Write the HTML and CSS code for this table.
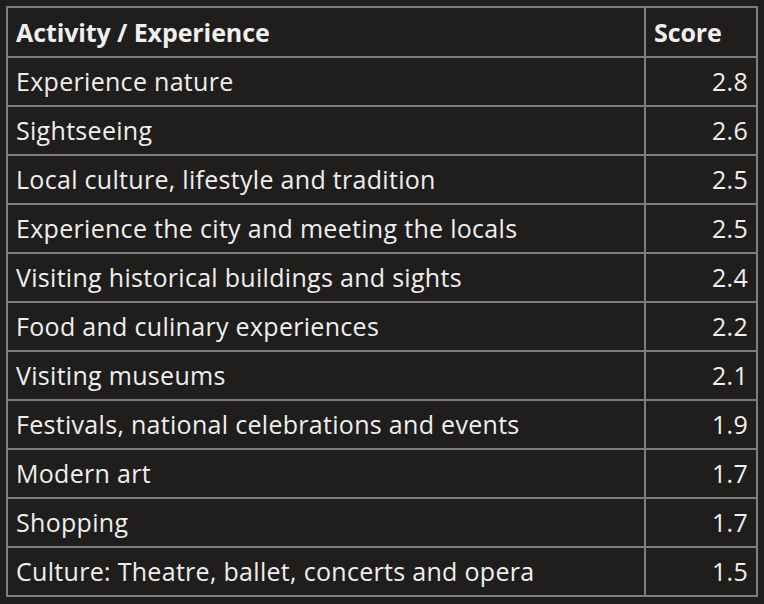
FILE: index.html
```html
<!DOCTYPE html>
<html>
<head>
<meta charset="utf-8">
<link rel="stylesheet" href="styles.css">
</head>
<body>
<table class="scores">
  <thead>
    <tr><th class="act">Activity / Experience</th><th class="score">Score</th></tr>
  </thead>
  <tbody>
    <tr><td>Experience nature</td><td class="num">2.8</td></tr>
    <tr><td>Sightseeing</td><td class="num">2.6</td></tr>
    <tr><td>Local culture, lifestyle and tradition</td><td class="num">2.5</td></tr>
    <tr><td>Experience the city and meeting the locals</td><td class="num">2.5</td></tr>
    <tr><td>Visiting historical buildings and sights</td><td class="num">2.4</td></tr>
    <tr><td>Food and culinary experiences</td><td class="num">2.2</td></tr>
    <tr><td>Visiting museums</td><td class="num">2.1</td></tr>
    <tr><td>Festivals, national celebrations and events</td><td class="num">1.9</td></tr>
    <tr><td>Modern art</td><td class="num">1.7</td></tr>
    <tr><td>Shopping</td><td class="num">1.7</td></tr>
    <tr><td>Culture: Theatre, ballet, concerts and opera</td><td class="num">1.5</td></tr>
  </tbody>
</table>
</body>
</html>
```
FILE: styles.css
```css
html, body {
  background: #1f1e1d;
}
body {
  margin: 6px;
  font-family: "Open Sans", Lato, sans-serif;
  color: #efefef;
}
.scores {
  width: 752px;
  border-collapse: collapse;
  border: 2px solid #7d7d7d;
  font-size: 25px;
}
.scores th, .scores td {
  border: 2px solid #7d7d7d;
  height: 49px;
  padding: 0 8px;
  box-sizing: border-box;
  text-align: left;
  vertical-align: middle;
  line-height: 1;
}
.scores td {
  letter-spacing: 0.3px;
}
.scores th {
  font-weight: bold;
  letter-spacing: -0.1px;
}
.scores thead th {
  height: 50px;
}
.scores .score {
  width: 112px;
}
.scores .num {
  text-align: right;
}
```
